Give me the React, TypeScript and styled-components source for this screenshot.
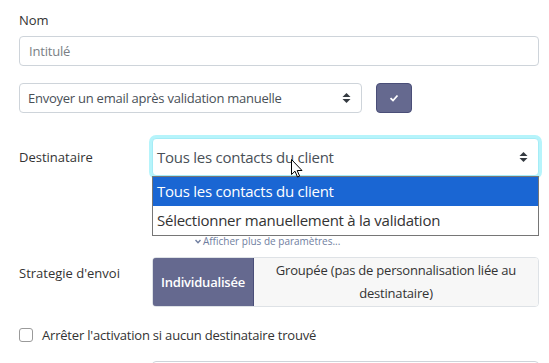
import React from "react";
import styled, { createGlobalStyle } from "styled-components";

const GlobalStyle = createGlobalStyle`
  body {
    margin: 0;
    background: #fff;
    font-family: "Open Sans", "Noto Sans", sans-serif;
    color: #212529;
  }
`;

const Page = styled.div`
  width: 549px;
  height: 363px;
  overflow: hidden;
  box-sizing: border-box;
  padding: 10px 10px 0 19px;
`;

const FieldLabel = styled.div`
  font-size: 13px;
  line-height: 20px;
  color: #333;
  margin-bottom: 6px;
`;

const TextInput = styled.input`
  display: block;
  box-sizing: border-box;
  width: 520px;
  height: 30px;
  border: 1px solid #ced4da;
  border-radius: 4px;
  padding: 0 9px;
  font-family: inherit;
  font-size: 13px;
  letter-spacing: -0.2px;
  color: #495057;
  outline: none;
  &::placeholder {
    color: #7a7f85;
  }
`;

const InlineRow = styled.div`
  display: flex;
  align-items: center;
  gap: 14px;
  margin-top: 17px;
`;

const SelectBox = styled.div<{ $width: number; $height: number; $size: number; $focused?: boolean }>`
  position: relative;
  box-sizing: border-box;
  width: ${(p) => p.$width}px;
  height: ${(p) => p.$height}px;
  display: flex;
  align-items: center;
  justify-content: space-between;
  padding: 0 10px 0 ${(p) => (p.$focused ? 4 : 8)}px;
  border: 1px solid ${(p) => (p.$focused ? "#a5ecf6" : "#ced4da")};
  border-radius: 4px;
  box-shadow: ${(p) => (p.$focused ? "0 0 0 3px #b6f4fb" : "none")};
  font-size: ${(p) => p.$size}px;
  letter-spacing: -0.25px;
  color: #495057;
  background: #fff;
`;

const Arrows = () => (
  <svg width="9" height="12" viewBox="0 0 9 12">
    <path d="M4.5 1 L8.5 5 H0.5 Z" fill="#343a40" />
    <path d="M4.5 11 L8.5 7 H0.5 Z" fill="#343a40" />
  </svg>
);

const CheckButton = styled.button`
  box-sizing: border-box;
  width: 36px;
  height: 30px;
  border: 1px solid #4a4e78;
  border-radius: 4px;
  background: #65698f;
  display: flex;
  align-items: center;
  justify-content: center;
  padding: 0;
`;

const FormRow = styled.div<{ $top: number }>`
  display: grid;
  grid-template-columns: 133px 387px;
  margin-top: ${(p) => p.$top}px;
  align-items: start;
`;

const RowLabel = styled.div<{ $pad: number }>`
  font-size: 13px;
  line-height: 20px;
  color: #333;
  padding-top: ${(p) => p.$pad}px;
`;

const Dropdown = styled.ul`
  position: absolute;
  top: 100%;
  left: -1px;
  width: 387px;
  box-sizing: border-box;
  margin: 1px 0 0;
  padding: 0;
  list-style: none;
  border: 1px solid #767676;
  background: #fff;
  z-index: 2;
`;

const Option = styled.li<{ $active?: boolean }>`
  height: 29px;
  line-height: 29px;
  padding-left: 4px;
  font-size: 15px;
  letter-spacing: -0.25px;
  color: ${(p) => (p.$active ? "#fff" : "#333")};
  background: ${(p) => (p.$active ? "#1a66d3" : "#fff")};
`;

const Cursor = styled.svg`
  position: absolute;
  left: 138px;
  top: 20px;
  z-index: 3;
`;

const MoreLink = styled.div`
  margin: 59px 0 0 43px;
  font-size: 10px;
  line-height: 12px;
  color: #6f7ea0;
  display: flex;
  align-items: center;
  gap: 2px;
`;

const Toggle = styled.div`
  display: flex;
  height: 50px;
  box-sizing: border-box;
  border-radius: 4px;
  overflow: hidden;
  border: 1px solid #dee2e6;
`;

const ToggleOption = styled.div<{ $active?: boolean; $width?: number }>`
  box-sizing: border-box;
  ${(p) => (p.$width ? `width: ${p.$width}px; flex: none;` : "flex: 1;")}
  display: flex;
  align-items: center;
  justify-content: center;
  text-align: center;
  padding: 0 ${(p) => (p.$active ? 2 : 6)}px;
  font-size: 13px;
  letter-spacing: -0.2px;
  line-height: 23px;
  font-weight: ${(p) => (p.$active ? 600 : 400)};
  color: ${(p) => (p.$active ? "#fff" : "#333")};
  background: ${(p) => (p.$active ? "#65698f" : "#f7f7f7")};
  border: ${(p) => (p.$active ? "1px solid #4a4e78" : "none")};
  border-radius: ${(p) => (p.$active ? "4px 0 0 4px" : "0")};
  margin: ${(p) => (p.$active ? "-1px 0 -1px -1px" : "0")};
`;

const CheckRow = styled.label`
  display: flex;
  align-items: center;
  gap: 9px;
  margin-top: 19px;
  font-size: 13px;
  letter-spacing: -0.2px;
  color: #333;
`;

const Box = styled.span`
  width: 14px;
  height: 14px;
  border: 1px solid #9a9a9a;
  border-radius: 3px;
  box-sizing: border-box;
`;

const BottomInput = styled.div`
  height: 30px;
  border: 1px solid #ced4da;
  border-radius: 4px;
`;

export default function App() {
  return (
    <Page>
      <GlobalStyle />
      <FieldLabel>Nom</FieldLabel>
      <TextInput placeholder="Intitulé" />

      <InlineRow>
        <SelectBox $width={343} $height={30} $size={13}>
          Envoyer un email après validation manuelle
          <Arrows />
        </SelectBox>
        <CheckButton>
          <svg width="10" height="8" viewBox="0 0 10 8">
            <path d="M1.5 4.2 L4 6.5 L8.5 1.5" stroke="#fff" strokeWidth="1.8" fill="none" />
          </svg>
        </CheckButton>
      </InlineRow>

      <FormRow $top={25}>
        <RowLabel $pad={9}>Destinataire</RowLabel>
        <div>
          <SelectBox $width={387} $height={38} $size={15} $focused>
            Tous les contacts du client
            <Arrows />
            <Dropdown>
              <Option $active>Tous les contacts du client</Option>
              <Option>Sélectionner manuellement à la validation</Option>
            </Dropdown>
            <Cursor width="12" height="19" viewBox="0 0 12 19">
              <path
                d="M0.5 0.5 V15.5 L4 12.2 L6.5 18 L8.6 17.1 L6.2 11.5 H11 Z"
                fill="#fff"
                stroke="#000"
                strokeWidth="1"
                strokeLinejoin="round"
              />
            </Cursor>
          </SelectBox>
          <MoreLink>
            <svg width="6" height="5" viewBox="0 0 6 5">
              <path d="M0.5 1 L3 3.8 L5.5 1" stroke="#6f7ea0" strokeWidth="1.4" fill="none" />
            </svg>
            Afficher plus de paramètres...
          </MoreLink>
        </div>
      </FormRow>

      <FormRow $top={10}>
        <RowLabel $pad={6}>Strategie d'envoi</RowLabel>
        <Toggle>
          <ToggleOption $active $width={102}>
            Individualisée
          </ToggleOption>
          <ToggleOption>Groupée (pas de personnalisation liée au destinataire)</ToggleOption>
        </Toggle>
      </FormRow>

      <CheckRow>
        <Box />
        Arrêter l'activation si aucun destinataire trouvé
      </CheckRow>

      <FormRow $top={17}>
        <div />
        <BottomInput />
      </FormRow>
    </Page>
  );
}
